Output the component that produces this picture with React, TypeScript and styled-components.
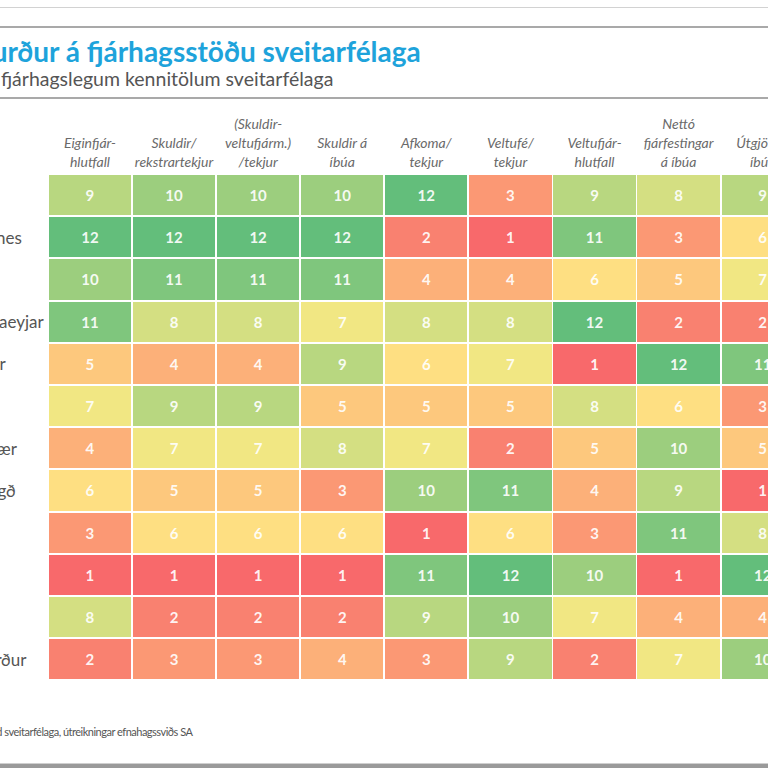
import styled, { createGlobalStyle } from "styled-components";

const GlobalStyle = createGlobalStyle`
  html, body {
    margin: 0;
    padding: 0;
    background: #fff;
  }
  body {
    font-family: Lato, "Open Sans", sans-serif;
    overflow: hidden;
  }
`;

const columns: string[][] = [
  ["Eiginfjár-", "hlutfall"],
  ["Skuldir/", "rekstrartekjur"],
  ["(Skuldir-", "veltufjárm.)", "/tekjur"],
  ["Skuldir á", "íbúa"],
  ["Afkoma/", "tekjur"],
  ["Veltufé/", "tekjur"],
  ["Veltufjár-", "hlutfall"],
  ["Nettó", "fjárfestingar", "á íbúa"],
  ["Útgjöld á", "íbúa"],
];

const rows: [string, number[]][] = [
  ["Reykjavík", [9, 10, 10, 10, 12, 3, 9, 8, 9]],
  ["Seltjarnarnes", [12, 12, 12, 12, 2, 1, 11, 3, 6]],
  ["Garðabær", [10, 11, 11, 11, 4, 4, 6, 5, 7]],
  ["Vestmannaeyjar", [11, 8, 8, 7, 8, 8, 12, 2, 2]],
  ["Kópavogur", [5, 4, 4, 9, 6, 7, 1, 12, 11]],
  ["Akureyri", [7, 9, 9, 5, 5, 5, 8, 6, 3]],
  ["Mosfellsbær", [4, 7, 7, 8, 7, 2, 5, 10, 5]],
  ["Fjarðabyggð", [6, 5, 5, 3, 10, 11, 4, 9, 1]],
  ["Akranes", [3, 6, 6, 6, 1, 6, 3, 11, 8]],
  ["Árborg", [1, 1, 1, 1, 11, 12, 10, 1, 12]],
  ["Grindavík", [8, 2, 2, 2, 9, 10, 7, 4, 4]],
  ["Hafnarfjörður", [2, 3, 3, 4, 3, 9, 2, 7, 10]],
];

// Excel style red - yellow - green scale over ranks 1..12
const RED = [248, 105, 107];
const YELLOW = [255, 235, 132];
const GREEN = [99, 190, 123];

function rankColor(v: number) {
  const mid = 6.5;
  const [from, to, t] =
    v <= mid ? [RED, YELLOW, (v - 1) / (mid - 1)] : [YELLOW, GREEN, (v - mid) / (12 - mid)];
  const c = from.map((f, i) => Math.round(f + (to[i] - f) * t));
  return `rgb(${c[0]}, ${c[1]}, ${c[2]})`;
}

const Page = styled.div`
  width: 768px;
  height: 768px;
  overflow: hidden;
  display: flex;
  flex-direction: column;
  position: relative;
`;

const ThinRule = styled.div`
  margin-top: 7px;
  height: 1px;
  background: #d2d2d2;
`;

const HeaderBox = styled.div`
  margin-top: 18px;
  height: 69px;
  border-top: 2px solid #a9a9a9;
  border-bottom: 2px solid #a9a9a9;
  display: flex;
  flex-direction: column;
  justify-content: center;
`;

const Title = styled.h1`
  margin: 0 0 0 -107px;
  font-family: Lato, sans-serif;
  font-weight: 700;
  font-size: 28px;
  line-height: 32px;
  color: #1ea3db;
  white-space: nowrap;
`;

const Subtitle = styled.div`
  margin-left: -157px;
  font-size: 19.5px;
  line-height: 24px;
  color: #555;
  white-space: nowrap;
`;

const Sheet = styled.div`
  margin-left: -90px;
  padding-left: 15px;
  width: max-content;
`;

const Table = styled.div`
  margin-top: 15px;
  display: grid;
  grid-template-columns: 122px repeat(9, 82.3px);
  grid-template-rows: auto;
  grid-auto-rows: 40.2px;
  column-gap: 1.8px;
  row-gap: 2px;
`;

const ColHead = styled.div`
  align-self: end;
  padding-bottom: 2px;
  text-align: center;
  font-style: italic;
  font-size: 14px;
  line-height: 19px;
  color: #6a6a6a;
  white-space: nowrap;
`;

const RowLabel = styled.div`
  display: flex;
  align-items: center;
  font-size: 17px;
  color: #555;
  white-space: nowrap;
`;

const Cell = styled.div<{ $bg: string }>`
  display: flex;
  align-items: center;
  justify-content: center;
  background: ${(p) => p.$bg};
  color: rgba(255, 255, 255, 0.92);
  font-weight: 700;
  font-size: 15px;
`;

const Footnote = styled.div`
  margin-top: 46px;
  margin-left: -77px;
  font-size: 11px;
  letter-spacing: -0.5px;
  color: #555;
  white-space: nowrap;
`;

const BottomRule = styled.div`
  position: absolute;
  left: 0;
  right: 0;
  bottom: 0;
  height: 4px;
  border-top: 1px solid #cfcfcf;
  background: #9a9a9a;
`;

export default function App() {
  return (
    <Page>
      <GlobalStyle />
      <ThinRule />
      <HeaderBox>
        <Title>Samanburður á fjárhagsstöðu sveitarfélaga</Title>
        <Subtitle>Röðun samkvæmt fjárhagslegum kennitölum sveitarfélaga</Subtitle>
      </HeaderBox>
      <Sheet>
        <Table>
          <div />
          {columns.map((lines, i) => (
            <ColHead key={i}>
              {lines.map((l, j) => (
                <div key={j}>{l}</div>
              ))}
            </ColHead>
          ))}
          {rows.map(([name, values]) => [
            <RowLabel key={name}>{name}</RowLabel>,
            ...values.map((v, i) => (
              <Cell key={name + i} $bg={rankColor(v)}>
                {v}
              </Cell>
            )),
          ])}
        </Table>
      </Sheet>
      <Footnote>Heimild: Samband sveitarfélaga, útreikningar efnahagssviðs SA</Footnote>
      <BottomRule />
    </Page>
  );
}
